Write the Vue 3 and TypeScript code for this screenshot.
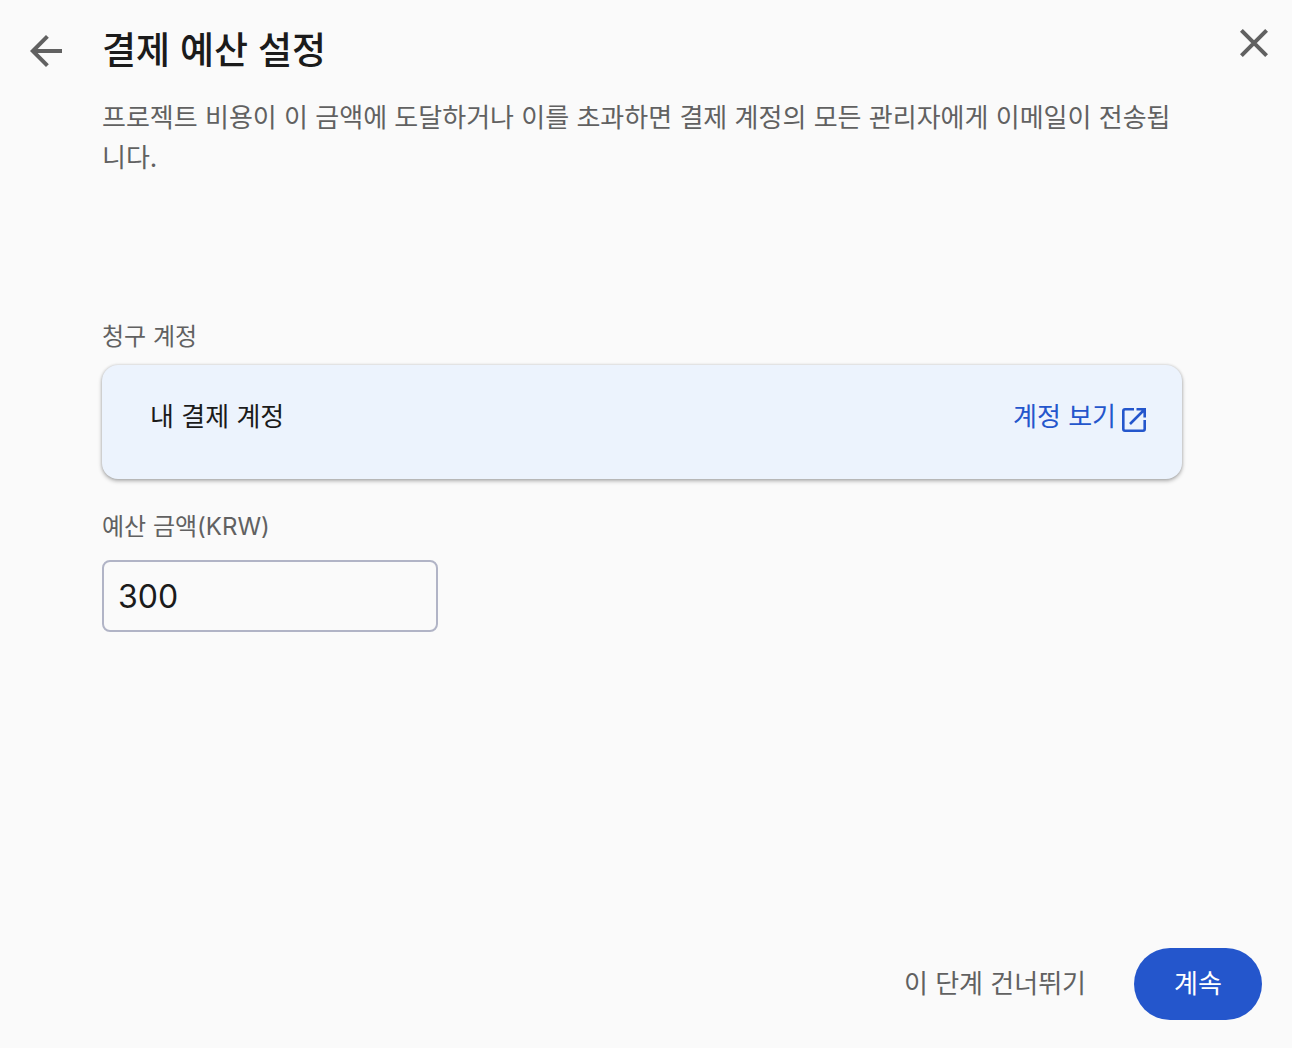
<script setup lang="ts">
import { ref } from 'vue'

const budget = ref<string>('300')
</script>

<template>
  <main class="dialog">
    <header class="header">
      <button class="icon-button back" type="button" aria-label="뒤로">
        <svg width="32" height="32" viewBox="0 0 32 32" fill="none" stroke="currentColor" stroke-width="4">
          <path d="M32 16H4M17.400 1.400L2.800 16l14.600 14.600" />
        </svg>
      </button>
      <div class="heading">
        <h1>결제 예산 설정</h1>
        <p>프로젝트 비용이 이 금액에 도달하거나 이를 초과하면 결제 계정의 모든 관리자에게 이메일이 전송됩니다.</p>
      </div>
      <button class="icon-button close" type="button" aria-label="닫기">
        <svg width="28" height="28" viewBox="0 0 28 28" fill="none" stroke="currentColor" stroke-width="4">
          <path d="M1.400 1.400l25.200 25.200M26.600 1.400L1.400 26.600" />
        </svg>
      </button>
    </header>

    <form id="budget-form" class="content" @submit.prevent>
      <h2 class="label">청구 계정</h2>
      <section class="account">
        <span class="account-name">내 결제 계정</span>
        <a class="account-link" href="#">
          계정 보기
          <svg width="24" height="24" viewBox="0 0 24 24" fill="none" stroke="currentColor" stroke-width="2.600">
            <path d="M12 1.300H3Q1.300 1.300 1.300 3v18q0 1.700 1.700 1.700h18q1.700 0 1.700-1.700v-9" />
            <path d="M8 16L22 2M14.500 1.300h8.200v8.200" />
          </svg>
        </a>
      </section>
      <label class="label" for="budget">예산 금액(KRW)</label>
      <input id="budget" v-model="budget" class="amount" type="text" inputmode="numeric" />
    </form>

    <footer class="actions">
      <button class="skip" type="button">이 단계 건너뛰기</button>
      <button class="continue" type="submit" form="budget-form">계속</button>
    </footer>
  </main>
</template>

<style>
body {
  background: #fafafa;
}
</style>

<style scoped>
.dialog {
  box-sizing: border-box;
  min-height: 100vh;
  display: flex;
  flex-direction: column;
  padding: 24px 24px 28px 30px;
  background: #fafafa;
  color: #1b1b1b;
  font-family: Inter, 'Noto Sans CJK KR', sans-serif;
}
button,
input {
  font-family: inherit;
}
button {
  border: 0;
  padding: 0;
  background: none;
  cursor: pointer;
}
svg {
  display: block;
  flex: none;
}
.header {
  display: flex;
  align-items: flex-start;
}
.icon-button {
  flex: none;
  color: #616161;
}
.back {
  margin: 11px 40px 0 0;
}
.close {
  margin: 5px 0 0 auto;
}
.heading {
  flex: 0 1 1080px;
}
h1 {
  margin: 0 0 20px;
  font-size: 37px;
  font-weight: 500;
  line-height: 54px;
}
p {
  margin: 0;
  font-size: 26px;
  line-height: 40px;
  color: #616161;
}
.content {
  flex: 1;
  display: flex;
  flex-direction: column;
  align-items: flex-start;
  margin: 143px 86px 0 72px;
}
.label {
  margin: 0;
  font-size: 24px;
  font-weight: 400;
  line-height: 32px;
  color: #616161;
}
.account {
  box-sizing: border-box;
  width: 100%;
  display: flex;
  justify-content: space-between;
  align-items: flex-start;
  margin: 12px 0 32px;
  padding: 32px 36px 42px 48px;
  border-radius: 16px;
  background: #ecf3fd;
  box-shadow: 0 2px 4px rgb(0 0 0 / 30%), 0 0 3px rgb(0 0 0 / 16%);
}
.account-name {
  font-size: 26px;
  line-height: 40px;
}
.account-link {
  display: flex;
  align-items: center;
  gap: 6px;
  font-size: 26px;
  line-height: 40px;
  color: #2456cc;
  text-decoration: none;
}
.account-link svg {
  margin-top: 6px;
}
.amount {
  box-sizing: border-box;
  width: 336px;
  height: 72px;
  margin-top: 17px;
  padding: 0 14px;
  border: 2px solid #b1b4c6;
  border-radius: 8px;
  background: transparent;
  color: #1b1b1b;
  font-size: 32px;
}
.actions {
  display: flex;
  justify-content: flex-end;
  gap: 48px;
  padding-right: 6px;
}
.skip,
.continue {
  height: 72px;
  padding-bottom: 6px;
  font-size: 26px;
  font-weight: 400;
}
.skip {
  color: #616161;
}
.continue {
  width: 128px;
  border-radius: 36px;
  background: #2456cc;
  color: #fff;
}
</style>
